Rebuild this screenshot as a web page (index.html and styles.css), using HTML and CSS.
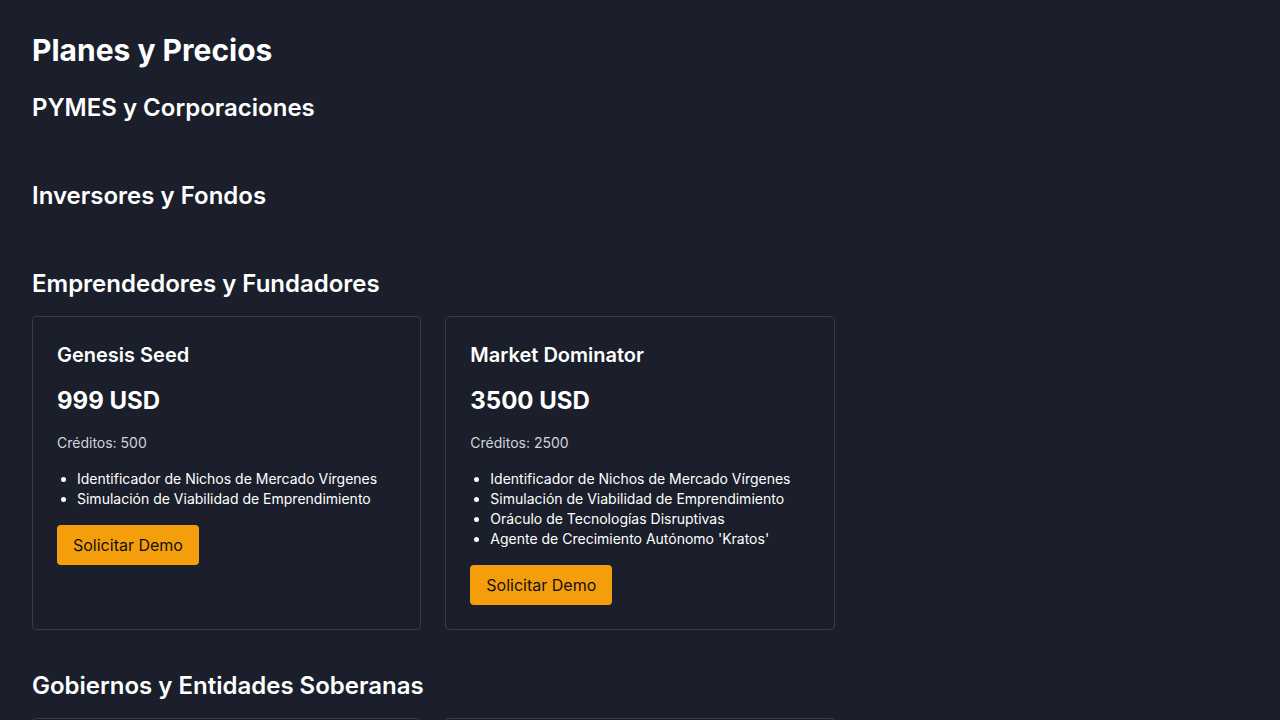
FILE: index.html
```html
<!DOCTYPE html>
<html lang="es">
<head>
<meta charset="utf-8">
<title>Planes y Precios</title>
<link rel="stylesheet" href="styles.css">
</head>
<body>
<main class="page">
  <h1 class="page-title">Planes y Precios</h1>

  <section class="segment">
    <h2 class="segment-title">PYMES y Corporaciones</h2>
    <div class="plans"></div>
  </section>

  <section class="segment">
    <h2 class="segment-title">Inversores y Fondos</h2>
    <div class="plans"></div>
  </section>

  <section class="segment">
    <h2 class="segment-title">Emprendedores y Fundadores</h2>
    <div class="plans">
      <article class="plan">
        <h3 class="plan-name">Genesis Seed</h3>
        <p class="plan-price">999 USD</p>
        <p class="plan-credits">Créditos: 500</p>
        <ul class="plan-features">
          <li>Identificador de Nichos de Mercado Vírgenes</li>
          <li>Simulación de Viabilidad de Emprendimiento</li>
        </ul>
        <button class="plan-btn">Solicitar Demo</button>
      </article>
      <article class="plan">
        <h3 class="plan-name">Market Dominator</h3>
        <p class="plan-price">3500 USD</p>
        <p class="plan-credits">Créditos: 2500</p>
        <ul class="plan-features">
          <li>Identificador de Nichos de Mercado Vírgenes</li>
          <li>Simulación de Viabilidad de Emprendimiento</li>
          <li>Oráculo de Tecnologías Disruptivas</li>
          <li>Agente de Crecimiento Autónomo 'Kratos'</li>
        </ul>
        <button class="plan-btn">Solicitar Demo</button>
      </article>
    </div>
  </section>

  <section class="segment">
    <h2 class="segment-title">Gobiernos y Entidades Soberanas</h2>
    <div class="plans">
      <article class="plan">
        <h3 class="plan-name">Sovereign Shield</h3>
        <p class="plan-price">25000 USD</p>
        <p class="plan-credits">Créditos: 20000</p>
        <ul class="plan-features">
          <li>Simulador de Políticas Públicas</li>
        </ul>
        <button class="plan-btn">Solicitar Demo</button>
      </article>
      <article class="plan">
        <h3 class="plan-name">Nation Architect</h3>
        <p class="plan-price">90000 USD</p>
        <p class="plan-credits">Créditos: 80000</p>
        <ul class="plan-features">
          <li>Simulador de Políticas Públicas</li>
        </ul>
        <button class="plan-btn">Solicitar Demo</button>
      </article>
    </div>
  </section>
</main>
</body>
</html>
```

FILE: styles.css
```css
* { box-sizing: border-box; }

html, body {
  margin: 0;
  padding: 0;
  background: #1a1f2b;
  color: #ffffff;
  font-family: Inter, "Noto Sans", "Liberation Sans", sans-serif;
}

.page {
  padding: 32px;
}

.page-title {
  margin: 0 0 24px;
  font-size: 30px;
  line-height: 36px;
  font-weight: 700;
}

.segment {
  margin-bottom: 40px;
}

.segment-title {
  margin: 0 0 16px;
  font-size: 24px;
  line-height: 32px;
  font-weight: 600;
}

.plans {
  display: grid;
  grid-template-columns: repeat(3, 1fr);
  gap: 24px;
}

.plan {
  border: 1px solid #353b4a;
  border-radius: 4px;
  padding: 24px;
  background: #1a1f2b;
}

.plan-name {
  margin: 0 0 16px;
  font-size: 20px;
  line-height: 28px;
  font-weight: 600;
}

.plan-price {
  margin: 0 0 16px;
  font-size: 24px;
  line-height: 32px;
  font-weight: 700;
}

.plan-credits {
  margin: 0 0 16px;
  font-size: 14px;
  line-height: 20px;
  color: #d1d5db;
}

.plan-features {
  margin: 0 0 16px;
  padding-left: 20px;
  font-size: 14px;
  line-height: 20px;
  list-style: disc;
}

.plan-btn {
  display: inline-block;
  height: 40px;
  padding: 0 16px;
  border: 0;
  border-radius: 4px;
  background: #f59e0b;
  color: #111111;
  font-family: inherit;
  font-size: 16px;
  line-height: 40px;
  cursor: pointer;
}
```
